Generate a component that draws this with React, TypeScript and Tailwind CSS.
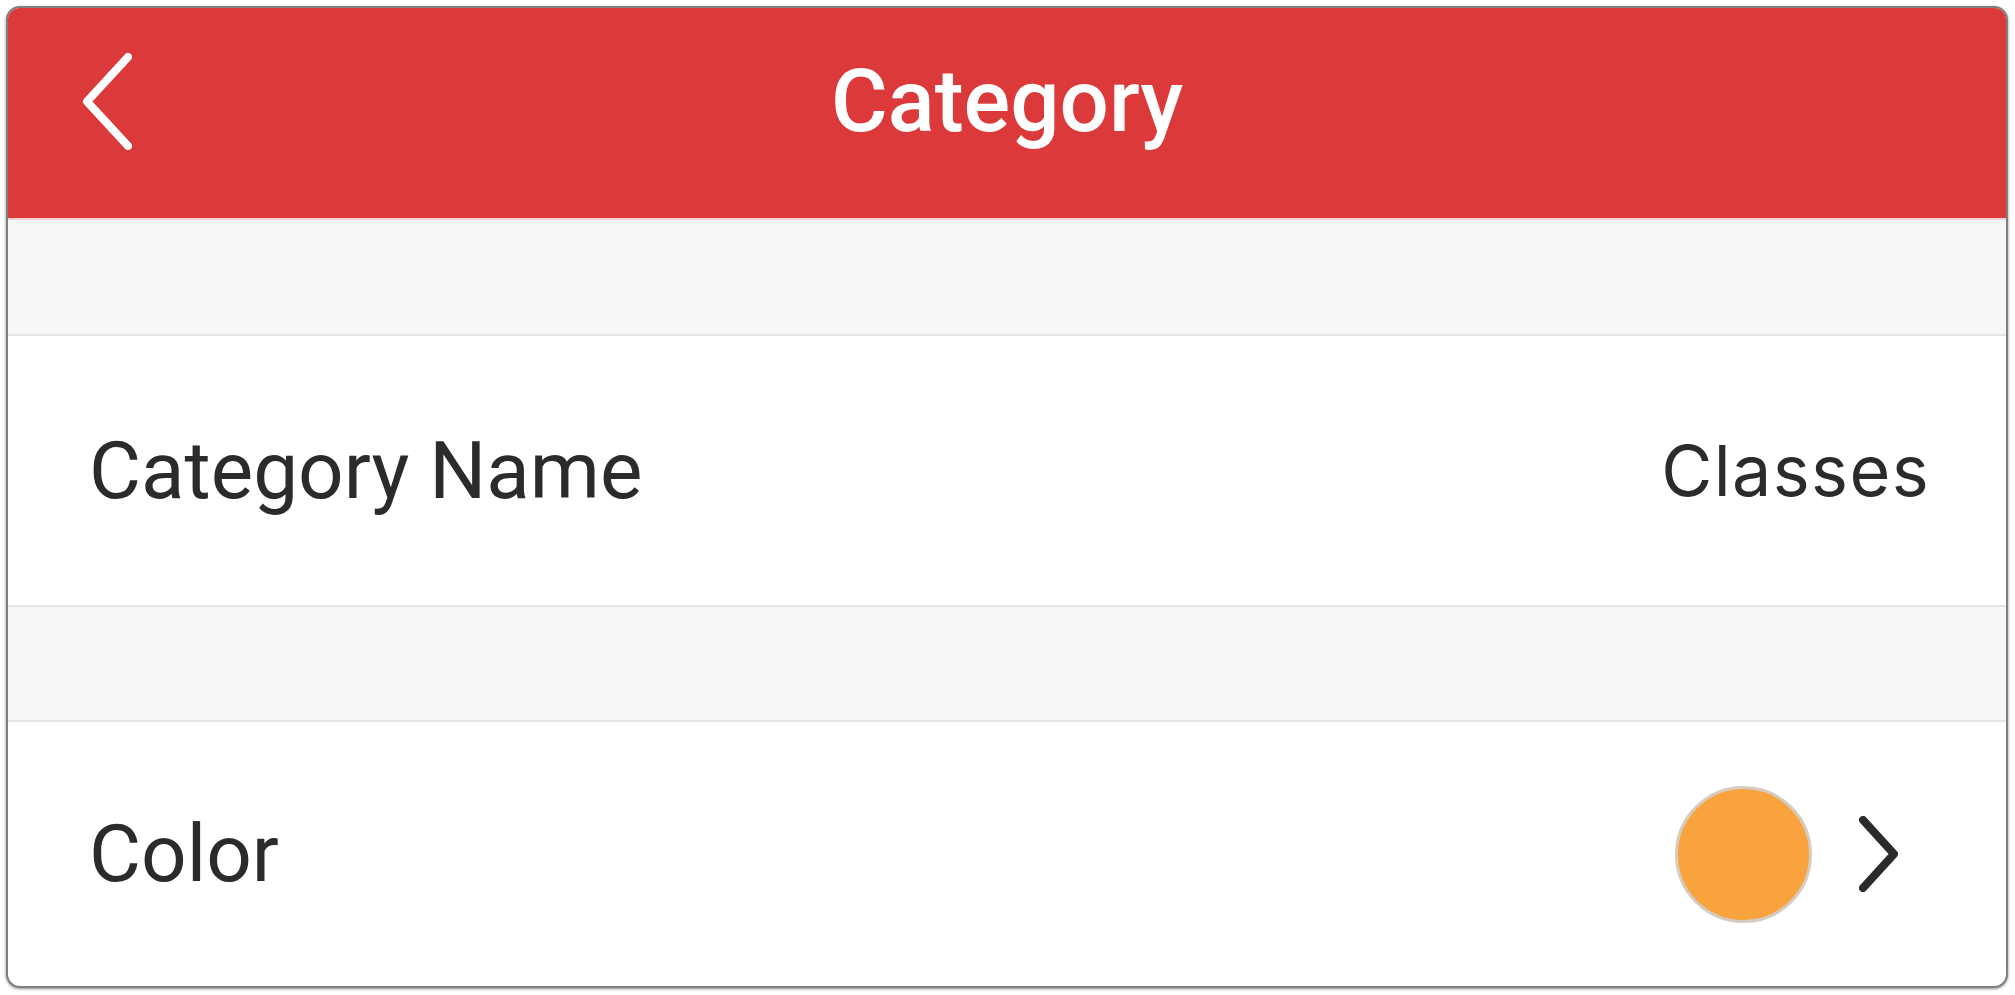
import React from "react";

const roboto = { fontFamily: "Roboto, 'Liberation Sans', sans-serif" };
const valueFont = { fontFamily: "Inter, 'Open Sans', sans-serif" };

function BackIcon() {
  return (
    <svg width="50" height="97" viewBox="0 0 50 97" fill="none">
      <path
        d="M46 4 L5 48.5 L46 93"
        stroke="white"
        strokeWidth="8"
        strokeLinecap="round"
        strokeLinejoin="round"
      />
    </svg>
  );
}

function ChevronRight() {
  return (
    <svg width="40" height="76" viewBox="0 0 40 76" fill="none">
      <path
        d="M4 4 L35 38 L4 72"
        stroke="#2b2b2b"
        strokeWidth="8"
        strokeLinecap="round"
        strokeLinejoin="round"
      />
    </svg>
  );
}

function Spacer({ height }: { height: string }) {
  return <div className={`bg-[#f7f7f7] border-b-2 border-[#e4e4e4] ${height}`} />;
}

export default function App() {
  const category = { name: "Classes", color: "#f8a33e" };

  return (
    <div className="w-[2015px] h-[995px] bg-white pt-[6px] pl-[6px] pr-[7px] pb-[7px]">
      <div className="h-full flex flex-col rounded-[14px] border-2 border-[#7f7f7f] shadow-[0_1px_3px_rgba(0,0,0,0.45)] overflow-hidden bg-white">
        {/* top bar */}
        <div className="h-[210px] shrink-0 bg-[#dc3a3a] pb-[24px] shadow-[0_2px_1px_rgba(220,58,58,0.18)] relative z-10">
          <div className="h-full grid grid-cols-[1fr_auto_1fr] items-center">
            <button className="justify-self-start ml-[74px] flex items-center">
              <BackIcon />
            </button>
            <h1 className="text-white text-[87px] leading-none font-medium" style={roboto}>
              Category
            </h1>
            <div />
          </div>
        </div>

        <Spacer height="h-[118px]" />

        {/* name row */}
        <div className="h-[271px] shrink-0 border-b-2 border-[#e4e4e4] flex items-center justify-between pl-[81px] pr-[76px]">
          <span className="text-[80px] leading-none text-[#2b2b2b]" style={roboto}>
            Category Name
          </span>
          <span className="text-[70px] leading-none text-[#2b2b2b] tracking-[0.02em]" style={valueFont}>
            {category.name}
          </span>
        </div>

        <Spacer height="h-[115px]" />

        {/* color row */}
        <div className="flex-1 flex items-center justify-between pl-[81px] pr-[107px]">
          <span className="text-[80px] leading-none text-[#2b2b2b]" style={roboto}>
            Color
          </span>
          <div className="flex items-center gap-[47px]">
            <div
              className="w-[137px] h-[137px] rounded-full border-[3px] border-[#d5cbbf]"
              style={{ backgroundColor: category.color }}
            />
            <ChevronRight />
          </div>
        </div>
      </div>
    </div>
  );
}
